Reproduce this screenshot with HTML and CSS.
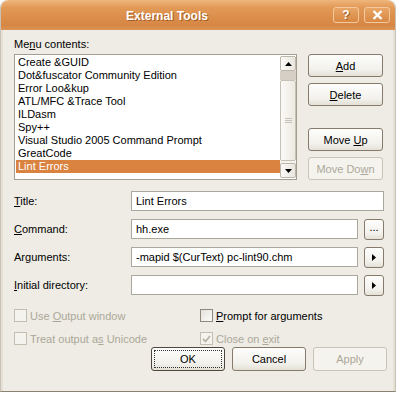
FILE: index.html
```html
<!DOCTYPE html>
<html lang="en">
<head>
  <meta charset="UTF-8">
  <title>External Tools</title>
  <link rel="stylesheet" href="styles.css">
</head>
<body>

<div class="window">
  <div class="titlebar">
    <div class="title">External Tools</div>
    <div class="caption-btns">
      <span class="cap-btn">?</span>
      <span class="cap-btn close">
        <svg width="11" height="10" viewBox="0 0 11 10"><path d="M1.5 1 L9.5 9 M9.5 1 L1.5 9" stroke="#fff" stroke-width="2.4"/></svg>
      </span>
    </div>
  </div>

  <div class="content">
    <div class="top-label">Me<u>n</u>u contents:</div>

    <div class="list-row">
      <div class="listbox">
        <ul class="items">
          <li>Create &amp;GUID</li>
          <li>Dot&amp;fuscator Community Edition</li>
          <li>Error Loo&amp;kup</li>
          <li>ATL/MFC &amp;Trace Tool</li>
          <li>ILDasm</li>
          <li>Spy++</li>
          <li>Visual Studio 2005 Command Prompt</li>
          <li>GreatCode</li>
          <li class="selected">Lint Errors</li>
        </ul>
        <div class="scrollbar">
          <div class="sb-btn"><svg width="7" height="4" viewBox="0 0 7 4"><path d="M0 4 L3.5 0 L7 4 Z" fill="#000"/></svg></div>
          <div class="sb-track-dark"></div>
          <div class="sb-thumb"><span class="grip"></span></div>
          <div class="sb-btn"><svg width="7" height="4" viewBox="0 0 7 4"><path d="M0 0 L3.5 4 L7 0 Z" fill="#000"/></svg></div>
        </div>
      </div>
      <div class="side-btns">
        <button class="btn"><u>A</u>dd</button>
        <button class="btn"><u>D</u>elete</button>
        <button class="btn move-up">Move <u>U</u>p</button>
        <button class="btn" disabled>Move Do<u>w</u>n</button>
      </div>
    </div>

    <div class="form">
      <div class="row">
        <label><u>T</u>itle:</label>
        <div class="field">Lint Errors</div>
      </div>
      <div class="row">
        <label><u>C</u>ommand:</label>
        <div class="field">hh.exe</div>
        <button class="small-btn">...</button>
      </div>
      <div class="row">
        <label>Ar<u>g</u>uments:</label>
        <div class="field">-mapid $(CurText) pc-lint90.chm</div>
        <button class="small-btn"><svg width="4" height="7" viewBox="0 0 4 7"><path d="M0 0 L4 3.5 L0 7 Z" fill="#000"/></svg></button>
      </div>
      <div class="row">
        <label><u>I</u>nitial directory:</label>
        <div class="field"></div>
        <button class="small-btn"><svg width="4" height="7" viewBox="0 0 4 7"><path d="M0 0 L4 3.5 L0 7 Z" fill="#000"/></svg></button>
      </div>
    </div>

    <div class="checks">
      <div class="check disabled"><span class="box"></span><span>Use <u>O</u>utput window</span></div>
      <div class="check"><span class="box"></span><span><u>P</u>rompt for arguments</span></div>
      <div class="check disabled"><span class="box"></span><span>Treat output a<u>s</u> Unicode</span></div>
      <div class="check disabled"><span class="box"><svg width="9" height="8" viewBox="0 0 9 8"><path d="M1 4 L3.5 6.5 L8 1" fill="none" stroke="#b8b4a6" stroke-width="1.8"/></svg></span><span>Close on <u>e</u>xit</span></div>
    </div>

    <div class="footer">
      <button class="btn wide focused"><span>OK</span></button>
      <button class="btn wide">Cancel</button>
      <button class="btn wide" disabled>Apply</button>
    </div>
  </div>
</div>

</body>
</html>
```

FILE: styles.css
```css
body {
  margin: 0;
  background: #fff;
  font-family: "Liberation Sans", Arial, sans-serif;
  font-size: 11px;
  color: #000;
}
u {
  text-decoration: underline;
  text-underline-offset: 1px;
}
.window {
  width: 396px;
  height: 392px;
  box-sizing: border-box;
  background: #eeece5;
  border-radius: 8px 8px 0 0;
  border: 1px solid #b07040;
  border-top: none;
  border-bottom-color: #8c8272;
  border-left-color: #c8c2b4;
  border-right-color: #c8c2b4;
  overflow: hidden;
  display: flex;
  flex-direction: column;
}
.titlebar {
  height: 30px;
  flex-shrink: 0;
  display: flex;
  align-items: center;
  background: linear-gradient(#efb57c 0, #e39a57 25%, #db8d4a 60%, #d68746 85%, #dc9454 100%);
  border-radius: 8px 8px 0 0;
}
.title {
  flex: 1;
  text-align: center;
  color: #fff;
  font-weight: bold;
  font-size: 12px;
  text-shadow: 1px 1px 0 #a35e26;
  padding-top: 1px;
}
.caption-btns {
  display: flex;
  gap: 5px;
  margin-right: 5px;
}
.cap-btn {
  width: 26px;
  height: 16px;
  box-sizing: border-box;
  border: 1px solid #f3c99f;
  border-radius: 3px;
  background: linear-gradient(#e8a566, #d98843);
  color: #fff;
  font-weight: bold;
  font-size: 12px;
  display: flex;
  align-items: center;
  justify-content: center;
  text-shadow: 1px 1px 0 #a35e26;
}
.content {
  flex: 1;
  padding: 8px 9px 0 11px;
  border-left: 2px solid #e4e0d6;
  border-right: 2px solid #e4e0d6;
}
.top-label {
  line-height: 13px;
}
.list-row {
  display: flex;
  margin-top: 3px;
  gap: 11px;
}
.listbox {
  width: 283px;
  height: 126px;
  box-sizing: border-box;
  border: 1px solid #a39d90;
  background: #fff;
  display: flex;
}
.items {
  flex: 1;
  list-style: none;
  margin: 0;
  padding: 1px 0 0 1px;
}
.items li {
  line-height: 13px;
  padding-left: 2px;
  white-space: nowrap;
}
.items li.selected {
  background: #da8240;
  color: #fff;
}
.scrollbar {
  width: 16px;
  margin: 1px 0;
  display: flex;
  flex-direction: column;
  background: #f5f3ee;
}
.sb-btn {
  height: 15px;
  box-sizing: border-box;
  border: 1px solid #bcb7aa;
  border-radius: 2px;
  background: linear-gradient(90deg, #fbfaf7, #e9e6de);
  display: flex;
  align-items: center;
  justify-content: center;
}
.sb-track-dark {
  height: 9px;
  background: #d6cfc5;
}
.sb-thumb {
  flex: 1;
  margin-bottom: 2px;
  box-sizing: border-box;
  border: 1px solid #c6c1b5;
  border-radius: 2px;
  background: linear-gradient(90deg, #fbfaf7, #ece9e1);
  display: flex;
  align-items: center;
  justify-content: center;
}
.grip {
  width: 7px;
  height: 5px;
  border-top: 1px solid #c8c3b8;
  border-bottom: 1px solid #c8c3b8;
  box-sizing: border-box;
  background: linear-gradient(#c8c3b8, #c8c3b8) center / 100% 1px no-repeat;
}
.side-btns {
  display: flex;
  flex-direction: column;
  gap: 6px;
}
.btn {
  width: 75px;
  height: 23px;
  box-sizing: border-box;
  border: 1px solid #857a6c;
  border-radius: 3px;
  background: linear-gradient(#fdfdfc, #f2f1ec 70%, #e3e0d6);
  font-family: inherit;
  font-size: 11px;
  color: #000;
  padding: 0;
}
.btn:disabled {
  color: #aca899;
  border-color: #c9c4b8;
  background: #f4f3ee;
}
.btn.move-up {
  margin-top: 16px;
}
.form {
  margin-top: 11px;
  display: flex;
  flex-direction: column;
  gap: 8px;
}
.row {
  display: flex;
  align-items: center;
  height: 20px;
}
.row label {
  width: 117px;
}
.field {
  flex: 1;
  height: 20px;
  box-sizing: border-box;
  border: 1px solid #aaa79c;
  background: #fff;
  padding: 0 4px;
  line-height: 18px;
  white-space: nowrap;
  overflow: hidden;
}
.small-btn {
  width: 20px;
  height: 21px;
  margin-left: 6px;
  box-sizing: border-box;
  border: 1px solid #857a6c;
  border-radius: 3px;
  background: linear-gradient(#fdfdfc, #f2f1ec 70%, #e3e0d6);
  font-family: inherit;
  font-size: 11px;
  padding: 0 0 3px;
  display: flex;
  align-items: center;
  justify-content: center;
  line-height: 11px;
}
.small-btn svg {
  margin-top: 3px;
}
.checks {
  margin-top: 14px;
  display: grid;
  grid-template-columns: 186px 1fr;
  row-gap: 10px;
}
.check {
  display: flex;
  align-items: center;
  height: 13px;
  gap: 3px;
}
.check.disabled {
  color: #aca899;
}
.box {
  width: 13px;
  height: 13px;
  box-sizing: border-box;
  border: 1px solid #8f897c;
  background: linear-gradient(135deg, #e4e2da, #fbfbf9);
  display: flex;
  align-items: center;
  justify-content: center;
}
.check.disabled .box {
  border-color: #c2beb2;
  background: #f4f3ee;
}
.footer {
  margin-top: 2px;
  display: flex;
  justify-content: flex-end;
  gap: 7px;
  margin-right: -3px;
}
.btn.wide {
  width: 74px;
  height: 24px;
}
.btn.focused {
  border-color: #4e473e;
  padding: 2px;
}
.btn.focused span {
  display: flex;
  align-items: center;
  justify-content: center;
  height: 100%;
  border: 1px dotted #333;
  box-sizing: border-box;
}
```
